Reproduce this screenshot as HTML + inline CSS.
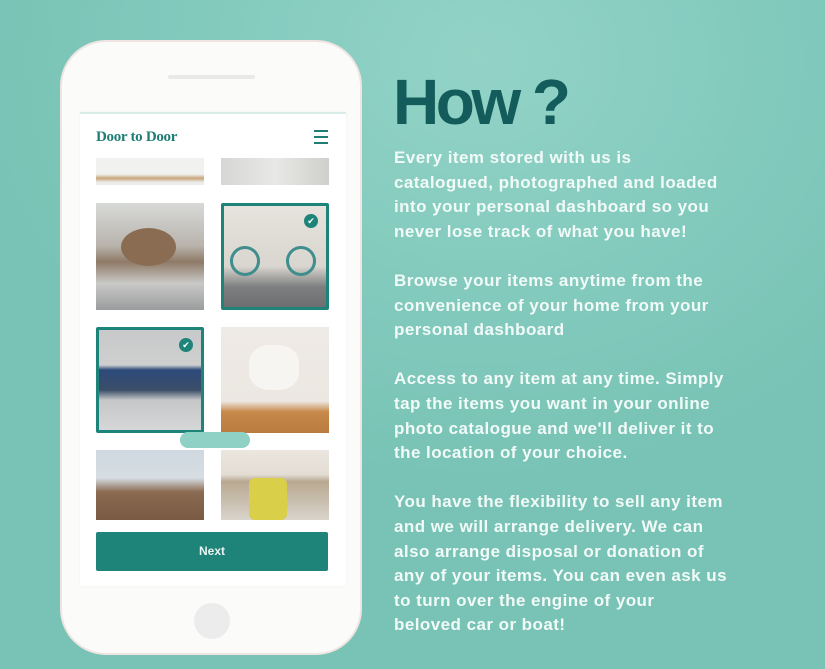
<!DOCTYPE html>
<html><head><meta charset="utf-8"><style>
*{margin:0;padding:0;box-sizing:border-box}
body{width:825px;height:669px;overflow:hidden;position:relative;font-family:"Liberation Sans",sans-serif;
background:radial-gradient(ellipse 500px 420px at 480px 60px,#93d3c7 0%,#84cbbe 50%,#78c3b5 100%);}
.phone{position:absolute;left:60px;top:40px;width:302px;height:615px;border-radius:46px;background:#fbfbfa;border:2px solid #f0e4e2;}
.spk{position:absolute;left:168px;top:75px;width:87px;height:4px;border-radius:2px;background:#e9e9e9}
.screen{position:absolute;left:80px;top:112px;width:266px;height:474px;background:#fff;border-top:2px solid #d9ece8;box-shadow:0 0 2px #eee}
.logo{position:absolute;left:96px;top:129px;font-family:"Liberation Serif",serif;font-weight:bold;font-size:15px;color:#1f7d74;letter-spacing:-0.3px}
.ham{position:absolute;left:314px;top:130px;width:14px}
.ham i{display:block;height:2px;background:#1f7d74;margin-bottom:4px}
.p{position:absolute;overflow:hidden}
.sel{border:3px solid #1e8479;border-radius:2px}
.chk{position:absolute;width:14px;height:14px;border-radius:50%;background:#1e8479;color:#fff;font-size:9px;text-align:center;line-height:14px}
.btn{position:absolute;left:96px;top:532px;width:232px;height:39px;background:#1e8479;border-radius:2px;color:#eaf4f2;font-weight:bold;font-size:12px;text-align:center;line-height:39px}
.home{position:absolute;left:194px;top:603px;width:36px;height:36px;border-radius:50%;background:#ececec}
h1{position:absolute;left:393px;top:62px;font-size:64px;font-weight:bold;color:#135c5b;letter-spacing:-3.5px;line-height:80px}
.txt{position:absolute;left:394px;top:146px;color:#f2faf8;font-weight:bold;font-size:17px;line-height:24.6px;white-space:nowrap;letter-spacing:0.45px}
.txt p{margin-bottom:24.6px}
</style></head><body>
<div class="phone"></div>
<div class="spk"></div>
<div class="screen"></div>
<div class="logo">Door to Door</div>
<div class="ham"><i></i><i></i><i></i></div>
<div class="p" style="left:96px;top:158px;width:108px;height:27px;background:linear-gradient(#f1f1ef 60%,#c9a57a 75%,#ececec 90%)"></div>
<div class="p" style="left:221px;top:158px;width:108px;height:27px;background:linear-gradient(90deg,#d6d6d4,#e8e8e6 50%,#cfcfcc)"></div>
<div class="p" style="left:96px;top:203px;width:108px;height:107px;background:linear-gradient(#d8dad8 0%,#b8b3ac 40%,#8f7a66 55%,#c9c9c7 75%,#9a9c9d 100%)">
 <div style="position:absolute;left:25px;top:25px;width:55px;height:38px;border-radius:50%;background:#8a6c52"></div></div>
<div class="p sel" style="left:221px;top:203px;width:108px;height:107px;background:linear-gradient(#e6e3dd 0%,#d9d5cf 60%,#7d7f80 80%,#6c6e70 100%)">
 <div style="position:absolute;left:6px;top:40px;width:30px;height:30px;border-radius:50%;border:3px solid #3f8d8c"></div>
 <div style="position:absolute;left:62px;top:40px;width:30px;height:30px;border-radius:50%;border:3px solid #3f8d8c"></div>
 <div class="chk" style="left:80px;top:8px">✔</div></div>
<div class="p sel" style="left:96px;top:327px;width:108px;height:106px;background:linear-gradient(#c7c9ca 0%,#cfcfcf 35%,#2c4a7a 40%,#3b4e68 60%,#c4c6c8 70%,#d6d7d8 100%)">
 <div class="chk" style="left:80px;top:8px">✔</div></div>
<div class="p" style="left:221px;top:327px;width:108px;height:106px;background:linear-gradient(#eeeae6 0%,#ece7e1 70%,#c78a4a 80%,#b97b3f 100%)">
 <div style="position:absolute;left:28px;top:18px;width:50px;height:45px;border-radius:40%;background:#f7f5f2"></div></div>
<div class="p" style="left:180px;top:432px;width:70px;height:16px;border-radius:8px;background:#8fd1c5"></div>
<div class="p" style="left:96px;top:450px;width:108px;height:70px;background:linear-gradient(#cfd8e0 0%,#d6dde3 40%,#8a6a50 60%,#7a5a42 100%)"></div>
<div class="p" style="left:221px;top:450px;width:108px;height:70px;background:linear-gradient(#ebe6df 0%,#e3ddd4 35%,#b8a890 45%,#d9d4cb 100%)">
 <div style="position:absolute;left:28px;top:28px;width:38px;height:42px;border-radius:6px;background:#d9cf49"></div></div>
<div class="btn">Next</div>
<div class="home"></div>
<h1>How ?</h1>
<div class="txt">
<p>Every item stored with us is<br>catalogued, photographed and loaded<br>into your personal dashboard so you<br>never lose track of what you have!</p>
<p>Browse your items anytime from the<br>convenience of your home from your<br>personal dashboard</p>
<p>Access to any item at any time. Simply<br>tap the items you want in your online<br>photo catalogue and we'll deliver it to<br>the location of your choice.</p>
<p>You have the flexibility to sell any item<br>and we will arrange delivery. We can<br>also arrange disposal or donation of<br>any of your items. You can even ask us<br>to turn over the engine of your<br>beloved car or boat!</p>
</div>
</body></html>
